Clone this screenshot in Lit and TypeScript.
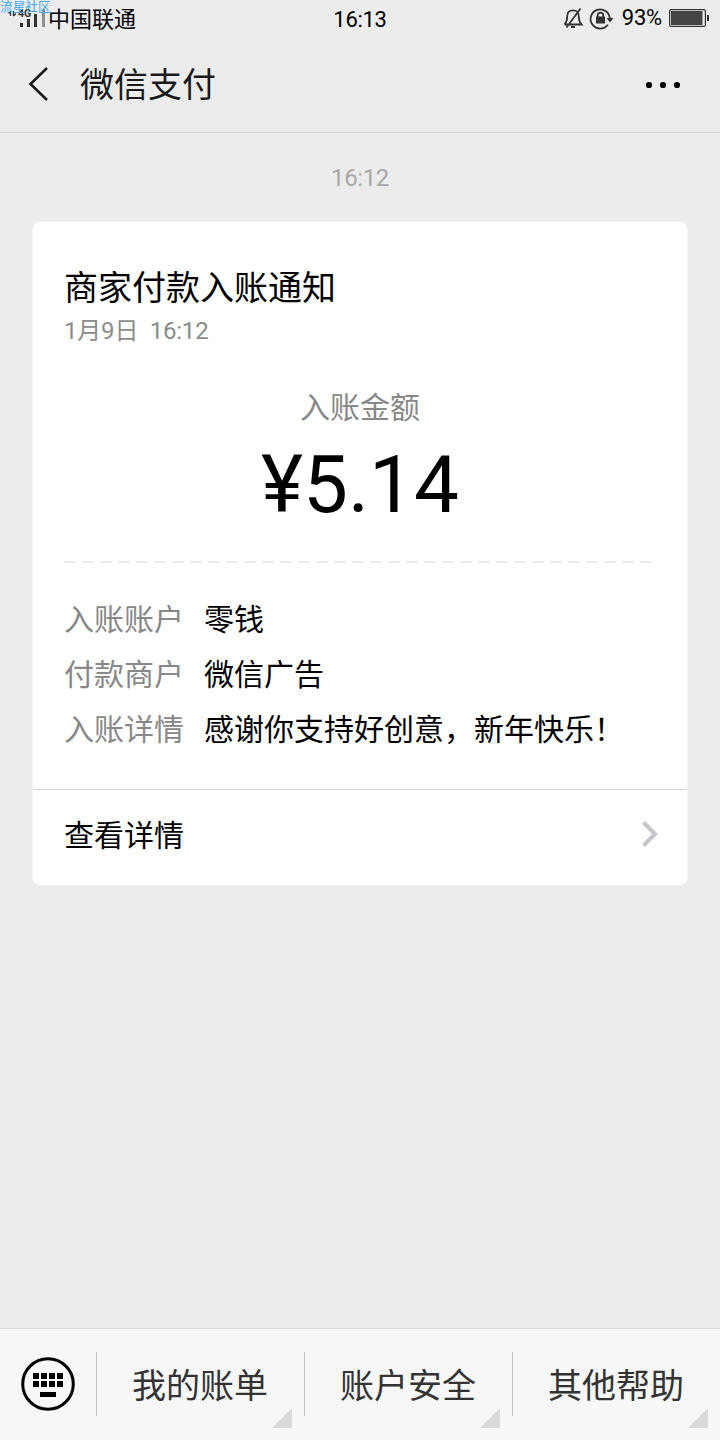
import { LitElement, html, css } from "lit";
import { customElement } from "lit/decorators.js";

const rows = [
  ["入账账户", "零钱"],
  ["付款商户", "微信广告"],
  ["入账详情", "感谢你支持好创意，新年快乐！"],
];
const menus = ["我的账单", "账户安全", "其他帮助"];

@customElement("app-root")
export class AppRoot extends LitElement {
  static styles = css`
    :host {
      display: flex;
      flex-direction: column;
      position: relative;
      width: 720px;
      height: 1440px;
      overflow: hidden;
      background: #ececec;
      color: #000;
      font-family: Roboto, "Noto Sans CJK SC", sans-serif;
    }
    svg { display: block; flex: none; }
    .status {
      display: grid;
      grid-template-columns: 1fr auto 1fr;
      align-items: center;
      height: 38px;
      flex: none;
      font-size: 22px;
      line-height: 38px;
    }
    .left { display: flex; }
    .carrier, .clock { line-height: 40px; height: 38px; }
    .clock { letter-spacing: -0.3px; }
    .right { display: flex; justify-content: flex-end; align-items: center; }
    .pct { line-height: 36px; height: 38px; padding: 0 7px 0 8px; letter-spacing: -0.2px; }
    .net { font-size: 10.5px; font-weight: 700; }
    .mark {
      position: absolute;
      left: 0;
      top: -2px;
      font-size: 12.7px;
      line-height: 18px;
      color: #42a9f4;
    }
    .head {
      display: flex;
      align-items: center;
      height: 94px;
      flex: none;
      border-bottom: 1px solid #d0d0d0;
      padding: 0 39px 0 28px;
    }
    .title { flex: 1; font-size: 34px; line-height: 94px; padding-left: 31px; color: #1a1a1a; }
    .chat { flex: 1; padding: 29px 32px 0; }
    .time { text-align: center; font-size: 24px; line-height: 32px; color: #a8a8a8; letter-spacing: -0.4px; }
    .card {
      margin-top: 27px;
      height: 665px;
      box-sizing: border-box;
      border: 1px solid #f4f4f4;
      border-radius: 8px;
      background: #fff;
      display: flex;
      flex-direction: column;
    }
    .body { flex: 1; padding: 42px 31px 0; }
    .name { font-size: 34px; line-height: 48px; }
    .date { font-size: 24px; line-height: 38px; color: #8c8c8c; white-space: pre; letter-spacing: -0.2px; }
    .label { margin-top: 36px; text-align: center; font-size: 30px; line-height: 44px; color: #888; }
    .amount { text-align: center; font-size: 80px; line-height: 94px; margin-top: 8px; }
    .dash {
      height: 2px;
      margin: 29px 0 0;
      background: repeating-linear-gradient(90deg, #ebebeb 0 12px, transparent 12px 18px);
    }
    .rows { padding-top: 29px; }
    .row { display: flex; font-size: 30px; line-height: 55px; }
    .key { color: #888; width: 140px; }
    .more {
      display: flex;
      align-items: center;
      justify-content: space-between;
      height: 96px;
      flex: none;
      box-sizing: border-box;
      padding: 0 28px 7px 31px;
      border-top: 1px solid #d9d9d9;
      font-size: 30px;
    }
    .more span { line-height: 92px; height: 88px; }
    .foot {
      display: flex;
      height: 111px;
      flex: none;
      border-top: 1px solid #d8d8d8;
      background: #f7f7f7;
    }
    .kbd { width: 96px; height: 110px; display: flex; align-items: center; justify-content: center; }
    .menu { position: relative; flex: 1; display: flex; align-items: flex-start; }
    .rule { width: 1px; height: 64px; margin-top: 23px; background: #c4c4c4; }
    .item { flex: 1; text-align: center; font-size: 34px; line-height: 114px; height: 111px; color: #333; padding-right: 1px; }
    .corner { position: absolute; right: 12px; bottom: 12px; }
  `;

  render() {
    return html`
      <div class="status">
        <div class="left">
          <svg width="48" height="38" viewBox="0 0 48 38">
            <path d="M10.5 11v5M8.500 13.500l2-2M13.500 11v5M13.500 16l2.500-2.500" stroke="#333" stroke-width="1.3" fill="none" />
            <text class="net" x="18" y="16.5" fill="#333">4G</text>
            <path d="M20 23h3v4h-3zM27 19h3v8h-3zM34 14h3v13h-3z" fill="#333" />
            <path d="M42 9h3v18h-3z" fill="#929292" />
          </svg>
          <span class="carrier">中国联通</span>
        </div>
        <span class="clock">16:13</span>
        <div class="right">
          <svg width="51" height="38" viewBox="0 0 51 38" fill="none" stroke="#333" stroke-width="1.8">
            <path d="M1.500 24.500H18.500C16.500 22.500 15.800 20.500 15.800 16.500C15.800 12.500 13.500 10.400 10 10.400C6.500 10.400 4.200 12.500 4.200 16.500C4.200 20.500 3.500 22.500 1.500 24.500M17.500 8.500L3.500 27.500M8 27h4" />
            <path d="M44.900 24.700A9.600 9.600 0 1 1 46.800 18.500" />
            <path d="M43.500 18h7l-3.500 4.500z" fill="#333" stroke="none" />
            <path d="M33 16.500h9v7h-9z" fill="#333" stroke="none" />
            <path d="M34.700 17v-1.500a2.800 2.800 0 0 1 5.600 0v1.500" />
          </svg>
          <span class="pct">93%</span>
          <svg width="51" height="38" viewBox="0 0 51 38">
            <rect x=".6" y="9.600" width="35.800" height="16.800" rx="1.500" fill="none" stroke="#333" stroke-width="1.200" />
            <rect x="2" y="11" width="31.500" height="14" fill="#444" />
            <rect x="38" y="15" width="2" height="6" fill="#333" />
          </svg>
        </div>
      </div>
      <div class="mark">流星社区</div>
      <div class="head">
        <svg width="21" height="36" viewBox="0 0 21 36"><path d="M19 1L2.500 17L19 33" fill="none" stroke="#1a1a1a" stroke-width="2.600" /></svg>
        <div class="title">微信支付</div>
        <svg width="36" height="8" viewBox="0 0 36 8"><circle cx="4" cy="4" r="3.100" /><circle cx="18" cy="4" r="3.100" /><circle cx="32" cy="4" r="3.100" /></svg>
      </div>
      <div class="chat">
        <div class="time">16:12</div>
        <div class="card">
          <div class="body">
            <div class="name">商家付款入账通知</div>
            <div class="date">1月9日  16:12</div>
            <div class="label">入账金额</div>
            <div class="amount">¥5.14</div>
            <div class="dash"></div>
            <div class="rows">
              ${rows.map(([k, v]) => html`<div class="row"><span class="key">${k}</span><span>${v}</span></div>`)}
            </div>
          </div>
          <div class="more">
            <span>查看详情</span>
            <svg width="18" height="28" viewBox="0 0 18 28"><path d="M2.500 2.500L14 14L2.500 25.500" fill="none" stroke="#c7c7cb" stroke-width="4.200" /></svg>
          </div>
        </div>
      </div>
      <div class="foot">
        <div class="kbd">
          <svg width="54" height="54" viewBox="0 0 54 54">
            <circle cx="27" cy="27" r="25.300" fill="none" stroke="#000" stroke-width="3" />
            <path d="M12 16h6v6h-6zM20 16h6v6h-6zM28 16h6v6h-6zM36 16h6v6h-6zM12 24h6v6h-6zM20 24h6v6h-6zM28 24h6v6h-6zM36 24h6v6h-6zM19 35h16v5H19z" />
          </svg>
        </div>
        ${menus.map(
          (m) => html`<div class="menu">
            <div class="rule"></div>
            <div class="item">${m}</div>
            <svg class="corner" width="20" height="20" viewBox="0 0 20 20"><path d="M20 0V20H0z" fill="#d9d9d9" /></svg>
          </div>`,
        )}
      </div>
    `;
  }
}
